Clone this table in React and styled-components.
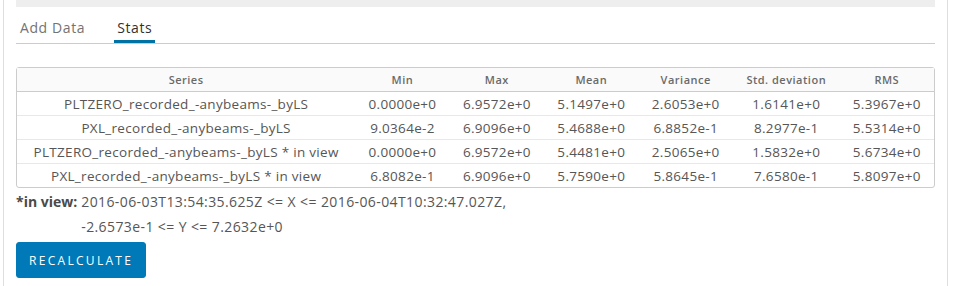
import React from "react";
import styled, { createGlobalStyle } from "styled-components";

const GlobalStyle = createGlobalStyle`
  body {
    margin: 0;
    background: #fff;
    font-family: "Open Sans", "Liberation Sans", sans-serif;
    color: #565656;
  }
`;

const Panel = styled.div`
  margin-left: 3px;
  width: 919px;
  height: 286px;
  padding: 0 12px;
  border-left: 1px solid #dedede;
  border-right: 1px solid #dedede;
  box-sizing: content-box;
`;

const TopBar = styled.div`
  height: 7px;
  background: #eeeeee;
`;

const TabNav = styled.ul`
  display: flex;
  gap: 26px;
  margin: 0;
  padding: 0 0 0 1px;
  list-style: none;
  height: 37px;
  border-bottom: 1px solid #cccccc;
  box-sizing: border-box;
`;

const Tab = styled.li`
  display: flex;
  align-items: center;
  padding: 4px 3px 0;
  font-size: 14px;
  letter-spacing: 0.6px;
  color: ${(p) => (p.$active ? "#313131" : "#737373")};
  box-shadow: ${(p) => (p.$active ? "inset 0 -3px 0 #0072a3" : "none")};
`;

const Content = styled.div`
  padding-top: 23px;
`;

const Table = styled.table`
  width: 100%;
  border-collapse: separate;
  border-spacing: 0;
  border: 1px solid #cccccc;
  border-radius: 3px;
  font-size: 13.5px;
  letter-spacing: 0.3px;
  color: #565656;
`;

const Th = styled.th`
  height: 23px;
  padding: 0 12px;
  font-size: 11px;
  font-weight: 600;
  letter-spacing: 0.5px;
  color: #6a6a6a;
  background: #fafafa;
  border-bottom: 1px solid #cccccc;
  text-align: center;
  white-space: nowrap;
`;

const Td = styled.td`
  height: 23px;
  padding: 0 12px;
  text-align: center;
  white-space: nowrap;
  border-top: ${(p) => (p.$first ? "none" : "1px solid #e8e8e8")};
`;

const Note = styled.div`
  display: grid;
  grid-template-columns: auto 1fr;
  column-gap: 4px;
  row-gap: 6px;
  margin-top: 4px;
  font-size: 14px;
  letter-spacing: 0.4px;
  line-height: 19px;
  color: #565656;
`;

const NoteLabel = styled.b`
  font-weight: 700;
  letter-spacing: 0;
  color: #4a4a4a;
`;

const Button = styled.button`
  margin-top: 6px;
  height: 36px;
  padding: 0 12px;
  background: #0079b8;
  border: 1px solid #0079b8;
  border-radius: 3px;
  color: #fff;
  font-family: inherit;
  font-size: 12px;
  letter-spacing: 2.3px;
  text-transform: uppercase;
`;

const columns = ["Series", "Min", "Max", "Mean", "Variance", "Std. deviation", "RMS"];

const rows = [
  ["PLTZERO_recorded_-anybeams-_byLS", "0.0000e+0", "6.9572e+0", "5.1497e+0", "2.6053e+0", "1.6141e+0", "5.3967e+0"],
  ["PXL_recorded_-anybeams-_byLS", "9.0364e-2", "6.9096e+0", "5.4688e+0", "6.8852e-1", "8.2977e-1", "5.5314e+0"],
  ["PLTZERO_recorded_-anybeams-_byLS * in view", "0.0000e+0", "6.9572e+0", "5.4481e+0", "2.5065e+0", "1.5832e+0", "5.6734e+0"],
  ["PXL_recorded_-anybeams-_byLS * in view", "6.8082e-1", "6.9096e+0", "5.7590e+0", "5.8645e-1", "7.6580e-1", "5.8097e+0"],
];

export default function App() {
  return (
    <>
      <GlobalStyle />
      <Panel>
        <TopBar />
        <TabNav>
          <Tab>Add Data</Tab>
          <Tab $active>Stats</Tab>
        </TabNav>
        <Content>
          <Table>
            <thead>
              <tr>
                {columns.map((name) => (
                  <Th key={name}>{name}</Th>
                ))}
              </tr>
            </thead>
            <tbody>
              {rows.map((row, i) => (
                <tr key={i}>
                  {row.map((cell, j) => (
                    <Td key={j} $first={i === 0}>
                      {cell}
                    </Td>
                  ))}
                </tr>
              ))}
            </tbody>
          </Table>
          <Note>
            <NoteLabel>*in view:</NoteLabel>
            <span>2016-06-03T13:54:35.625Z &lt;= X &lt;= 2016-06-04T10:32:47.027Z,</span>
            <span />
            <span>-2.6573e-1 &lt;= Y &lt;= 7.2632e+0</span>
          </Note>
          <Button>Recalculate</Button>
        </Content>
      </Panel>
    </>
  );
}
